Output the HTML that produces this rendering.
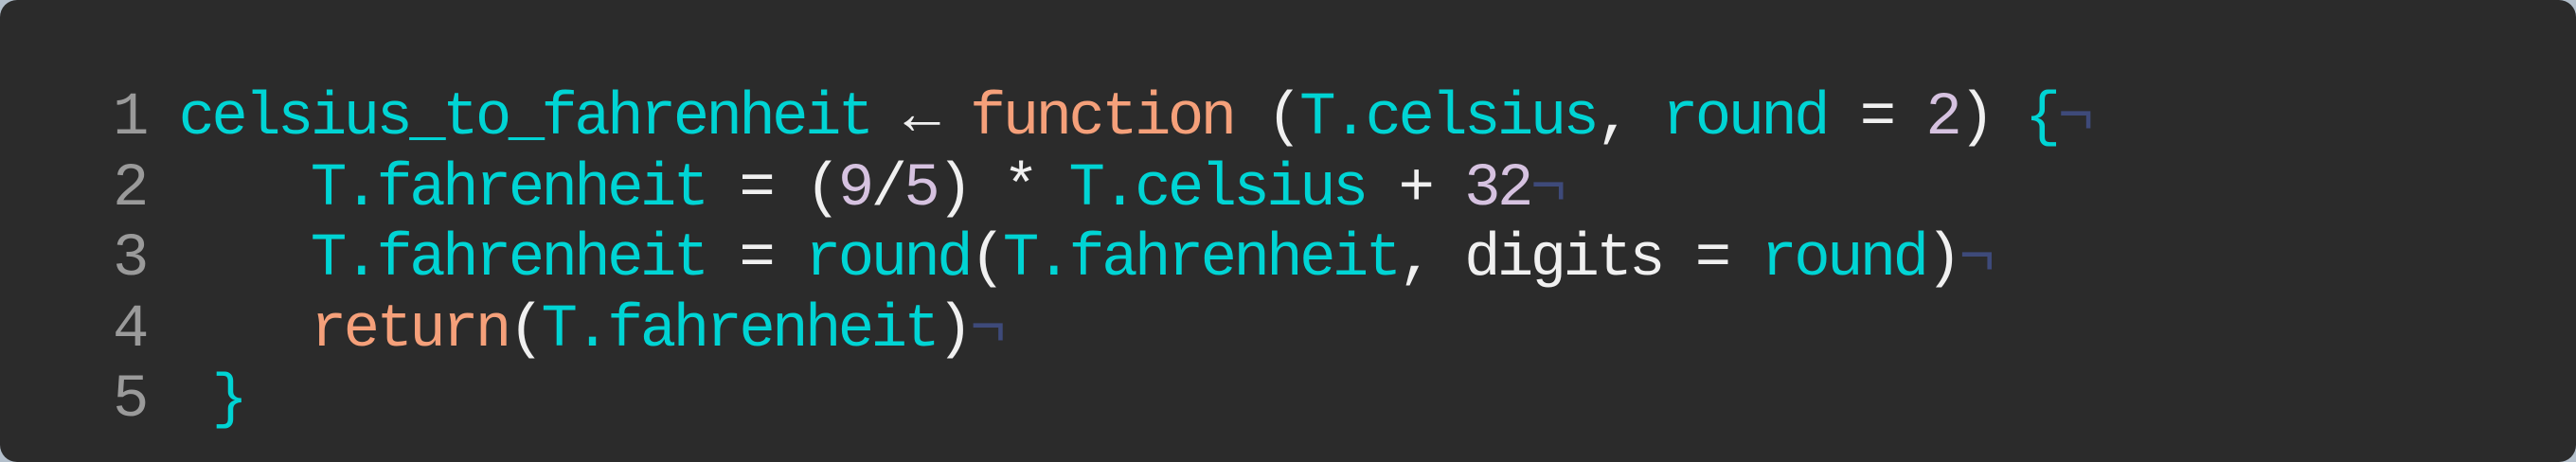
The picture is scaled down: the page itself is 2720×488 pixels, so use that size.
<!DOCTYPE html>
<html><head><style>
html,body{margin:0;padding:0;background:#b3bfcb;}
.box{width:2720px;height:488px;background:#2b2b2b;border-radius:18px;position:relative;overflow:hidden;}
pre{position:absolute;left:119px;top:88px;margin:0;font-family:"Liberation Mono",monospace;font-size:64px;letter-spacing:-3.6px;line-height:74.6px;color:#f0f0f0;}
.n{color:#9a9a9a}.c{color:#00d4d4}.o{color:#f5a07a}.p{color:#d6c2e0}.e{color:#3e4a7a}
</style></head><body><div class="box"><pre><span class="n">1</span> <span class="c">celsius_to_fahrenheit</span> ← <span class="o">function</span> (<span class="c">T.celsius</span>, <span class="c">round</span> = <span class="p">2</span>) <span class="c">{</span><span class="e">¬</span>
<span class="n">2</span>     <span class="c">T.fahrenheit</span> = (<span class="p">9</span>/<span class="p">5</span>) * <span class="c">T.celsius</span> + <span class="p">32</span><span class="e">¬</span>
<span class="n">3</span>     <span class="c">T.fahrenheit</span> = <span class="c">round</span>(<span class="c">T.fahrenheit</span>, digits = <span class="c">round</span>)<span class="e">¬</span>
<span class="n">4</span>     <span class="o">return</span>(<span class="c">T.fahrenheit</span>)<span class="e">¬</span>
<span class="n">5</span>  <span class="c">}</span></pre></div></body></html>
